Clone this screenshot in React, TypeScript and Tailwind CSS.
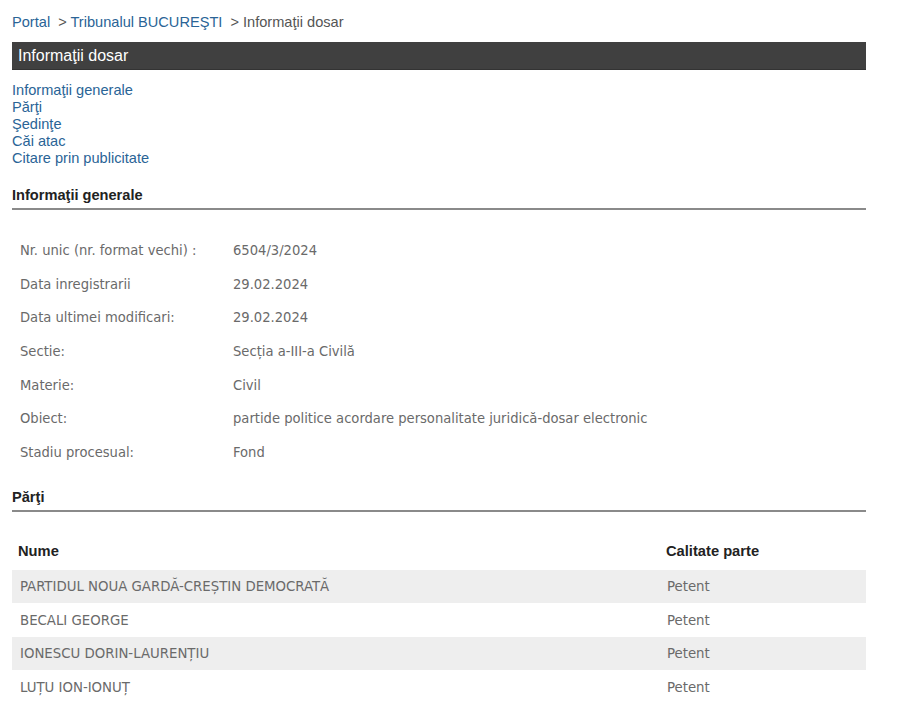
import React from "react";

const info: [string, string][] = [
  ["Nr. unic (nr. format vechi) :", "6504/3/2024"],
  ["Data inregistrarii", "29.02.2024"],
  ["Data ultimei modificari:", "29.02.2024"],
  ["Sectie:", "Secția a-III-a Civilă"],
  ["Materie:", "Civil"],
  ["Obiect:", "partide politice acordare personalitate juridică-dosar electronic"],
  ["Stadiu procesual:", "Fond"],
];

const parti: [string, string][] = [
  ["PARTIDUL NOUA GARDĂ-CREȘTIN DEMOCRATĂ", "Petent"],
  ["BECALI GEORGE", "Petent"],
  ["IONESCU DORIN-LAURENȚIU", "Petent"],
  ["LUȚU ION-IONUȚ", "Petent"],
];

export default function App() {
  return (
    <div className="bg-white min-h-[718px] w-[900px] font-['Liberation_Sans',Arial,sans-serif]">
      <div className="ml-[12px] w-[854px] pt-[13px]">
        <div className="text-[14.6px] leading-[18px] text-[#555]">
          <a className="text-[#2a6496]">Portal</a>
          <span className="ml-[8px]">&gt; </span>
          <a className="text-[#2a6496]">Tribunalul BUCUREŞTI</a>
          <span className="ml-[8px]">&gt; Informaţii dosar</span>
        </div>
        <div className="mt-[11px] h-[28px] bg-[#404040] text-white text-[16px] leading-[28px] pl-[6px] border-b border-[#333]">
          Informaţii dosar
        </div>
        <div className="mt-[12px] flex flex-col text-[14.6px] leading-[17px] text-[#2a6496]">
          <a>Informaţii generale</a>
          <a>Părţi</a>
          <a>Şedinţe</a>
          <a>Căi atac</a>
          <a>Citare prin publicitate</a>
        </div>
        <div className="mt-[20px] text-[14.6px] font-bold text-[#222] leading-[17px] pb-[4px] border-b-2 border-[#8a8a8a]">
          Informaţii generale
        </div>
        <div className="mt-[23px] flex flex-col font-['DejaVu_Sans_Condensed',Tahoma,sans-serif] text-[14.6px] text-[#6a6a6a]">
          {info.map(([k, v]) => (
            <div key={k} className="flex h-[33.7px] items-center">
              <div className="w-[221px] pl-[8px]">{k}</div>
              <div>{v}</div>
            </div>
          ))}
        </div>
        <div className="mt-[20px] text-[14.6px] font-bold text-[#222] leading-[17px] pb-[4px] border-b-2 border-[#8a8a8a]">
          Părţi
        </div>
        <div className="mt-[21px] flex text-[14.7px] font-bold text-[#222] h-[37px] items-center">
          <div className="w-[654px] pl-[6px]">Nume</div>
          <div>Calitate parte</div>
        </div>
        <div className="flex flex-col font-['DejaVu_Sans_Condensed',Tahoma,sans-serif] text-[14.8px] text-[#6a6a6a]">
          {parti.map(([n, c], i) => (
            <div key={n} className={`flex h-[33.5px] items-center ${i % 2 === 0 ? "bg-[#eeeeee]" : "bg-white"}`}>
              <div className="w-[655px] pl-[8px]">{n}</div>
              <div>{c}</div>
            </div>
          ))}
        </div>
      </div>
    </div>
  );
}
